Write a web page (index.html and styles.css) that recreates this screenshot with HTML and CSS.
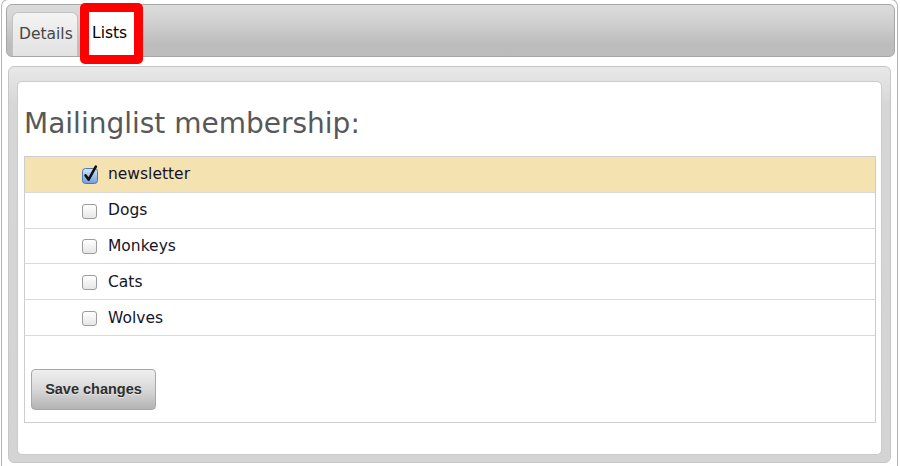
FILE: index.html
```html
<!DOCTYPE html>
<html>
<head>
<meta charset="utf-8">
<title>Lists</title>
<link rel="stylesheet" href="styles.css">
</head>
<body>
<div class="frame">
  <div class="tabbar">
    <div class="tab">Details</div>
    <div class="tab tab-active">Lists</div>
  </div>
  <div class="panel">
    <div class="panel-inner">
      <h2 class="title">Mailinglist membership:</h2>
      <div class="list">
        <div class="row row-on">
          <span class="cb cb-on"><svg width="18" height="19" viewBox="0 0 18 19"><defs><linearGradient id="bg" x1="0" y1="0" x2="0" y2="1"><stop offset="0" stop-color="#d4e6fa"/><stop offset="1" stop-color="#6d9fdc"/></linearGradient></defs><rect x="0.5" y="3.5" width="15" height="15" rx="3" fill="url(#bg)" stroke="#4f78ae"/><path d="M3.6 10.4 L6.6 14.6 L13.8 1.6" fill="none" stroke="#111" stroke-width="2.6" stroke-linejoin="round" stroke-linecap="round"/></svg></span>
          <span class="lbl">newsletter</span>
        </div>
        <div class="row"><span class="cb"></span><span class="lbl">Dogs</span></div>
        <div class="row"><span class="cb"></span><span class="lbl">Monkeys</span></div>
        <div class="row"><span class="cb"></span><span class="lbl">Cats</span></div>
        <div class="row"><span class="cb"></span><span class="lbl">Wolves</span></div>
        <div class="actions">
          <button class="btn">Save changes</button>
        </div>
      </div>
    </div>
  </div>
</div>
</body>
</html>
```
FILE: styles.css
```css
html, body {
  margin: 0;
  padding: 0;
  overflow: hidden;
  background: #fff;
  font-family: "DejaVu Sans", Verdana, sans-serif;
}

.frame {
  margin: -1px 2px 0 1px;
  height: 466px;
  border: 1px solid #b4b4b4;
  border-bottom: none;
  border-radius: 7px 7px 0 0;
  background: #fff;
}

.tabbar {
  margin: 4px 2px 0 4px;
  height: 51px;
  border: 1px solid #a6a6a6;
  border-radius: 6px;
  background: linear-gradient(#dcdcdc, #d2d2d2 30%, #bdbdbd 75%, #bcbcbc);
  display: flex;
  align-items: flex-end;
  gap: 2px;
  padding-left: 5px;
}

.tab {
  box-sizing: border-box;
  width: 66px;
  height: 44px;
  padding: 0 5px 0 6px;
  border: 1px solid #c2c2c2;
  border-bottom: none;
  border-radius: 6px 6px 0 0;
  background: linear-gradient(#f3f3f3, #e2e2e2);
  color: #464646;
  font-size: 15.5px;
  line-height: 42px;
}

.tab-active {
  position: relative;
  z-index: 2;
  width: 63px;
  height: 61px;
  margin-bottom: -8px;
  border: 9px solid #ff0000;
  border-radius: 5px;
  background: #fff;
  color: #000;
  padding: 1px 0 0 3px;
  line-height: 40px;
}

.panel {
  box-sizing: border-box;
  margin: 9px 6px 0 6px;
  height: 397px;
  border: 1px solid #c6c6c6;
  border-radius: 6px;
  background: linear-gradient(#e8e8e8, #d6d6d6 10%, #d4d4d4);
  padding: 14px 8px 0 8px;
}

.panel-inner {
  box-sizing: border-box;
  height: 374px;
  border: 1px solid #cbcbcb;
  border-radius: 5px;
  background: #fff;
  padding: 0 5px 0 6px;
}

.title {
  margin: 26px 0 16px 0;
  font-size: 28px;
  line-height: 32px;
  font-weight: normal;
  color: #585858;
}

.list {
  border: 1px solid #cdcdcd;
}

.row {
  display: flex;
  align-items: center;
  height: 34.8px;
  border-bottom: 1px solid #d9d9d9;
  padding-left: 57px;
}

.row-on {
  background: #f5e2b1;
}

.cb {
  box-sizing: border-box;
  position: relative;
  top: 1px;
  flex: none;
  width: 15px;
  height: 15px;
  margin-right: 11px;
  border: 1px solid #9c9c9c;
  border-radius: 3px;
  background: linear-gradient(#ffffff, #e6e6e6);
}

.cb-on {
  border: none;
  background: none;
}

.cb-on svg {
  position: absolute;
  left: 0;
  top: -3px;
}

.lbl {
  font-size: 15.5px;
  color: #141428;
}

.actions {
  padding: 33px 0 12px 6px;
}

.btn {
  display: block;
  width: 125px;
  height: 41px;
  padding: 0;
  border: 1px solid #a8a8a8;
  border-radius: 4px;
  background: linear-gradient(#efefef, #d8d8d8 50%, #b3b3b3);
  font-family: "Liberation Sans", Arial, sans-serif;
  font-weight: bold;
  font-size: 14.5px;
  color: #2e2e2e;
  text-shadow: 0 1px 0 rgba(255,255,255,0.5);
}
```
